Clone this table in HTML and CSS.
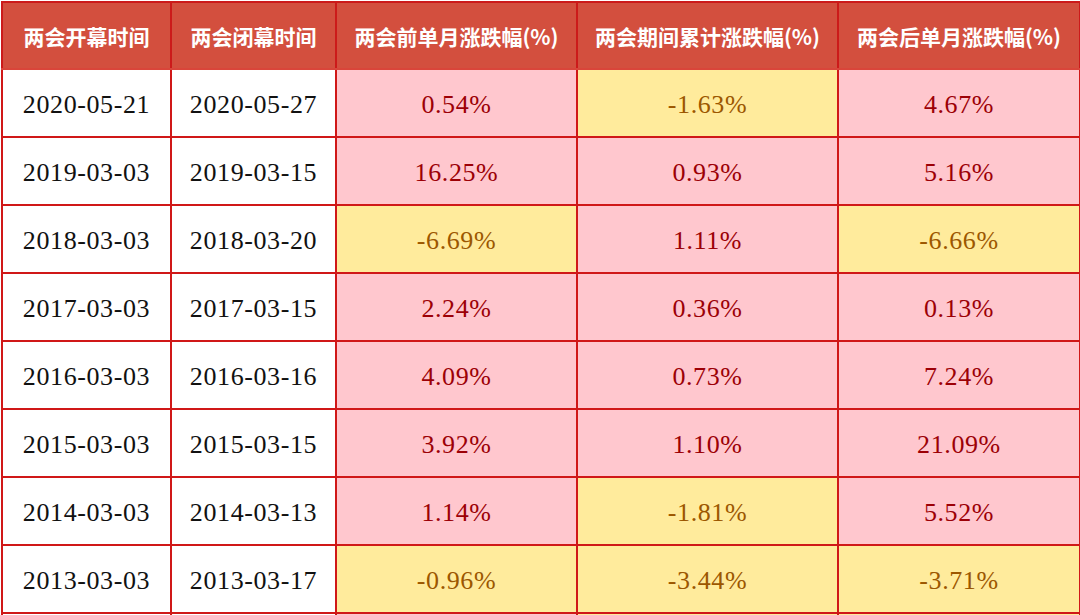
FILE: index.html
```html
<!DOCTYPE html>
<html lang="zh-CN">
<head>
<meta charset="utf-8">
<title>两会期间涨跌幅</title>
<link rel="stylesheet" href="styles.css">
</head>
<body>
<div class="wrap">
<table class="grid">
  <colgroup>
    <col class="c1"><col class="c2"><col class="c3"><col class="c4"><col class="c5">
  </colgroup>
  <thead>
    <tr>
      <th>两会开幕时间</th>
      <th>两会闭幕时间</th>
      <th>两会前单月涨跌幅(%)</th>
      <th>两会期间累计涨跌幅(%)</th>
      <th>两会后单月涨跌幅(%)</th>
    </tr>
  </thead>
  <tbody>
    <tr><td>2020-05-21</td><td>2020-05-27</td><td class="up">0.54%</td><td class="dn">-1.63%</td><td class="up">4.67%</td></tr>
    <tr><td>2019-03-03</td><td>2019-03-15</td><td class="up">16.25%</td><td class="up">0.93%</td><td class="up">5.16%</td></tr>
    <tr><td>2018-03-03</td><td>2018-03-20</td><td class="dn">-6.69%</td><td class="up">1.11%</td><td class="dn">-6.66%</td></tr>
    <tr><td>2017-03-03</td><td>2017-03-15</td><td class="up">2.24%</td><td class="up">0.36%</td><td class="up">0.13%</td></tr>
    <tr><td>2016-03-03</td><td>2016-03-16</td><td class="up">4.09%</td><td class="up">0.73%</td><td class="up">7.24%</td></tr>
    <tr><td>2015-03-03</td><td>2015-03-15</td><td class="up">3.92%</td><td class="up">1.10%</td><td class="up">21.09%</td></tr>
    <tr><td>2014-03-03</td><td>2014-03-13</td><td class="up">1.14%</td><td class="dn">-1.81%</td><td class="up">5.52%</td></tr>
    <tr><td>2013-03-03</td><td>2013-03-17</td><td class="dn">-0.96%</td><td class="dn">-3.44%</td><td class="dn">-3.71%</td></tr>
    <tr><td></td><td></td><td class="up"></td><td class="dn"></td><td class="dn"></td></tr>
  </tbody>
</table>
</div>
</body>
</html>
```

FILE: styles.css
```css
html, body {
  margin: 0;
  padding: 0;
  background: #ffffff;
  overflow: hidden;
}

.wrap {
  padding: 1px 1px 0 1px;
  width: 1078px;
}

.grid {
  border-collapse: collapse;
  table-layout: fixed;
  width: 1078px;
  border: 2px solid #d9453a;
}

.c1 { width: 169px; }
.c2 { width: 165px; }
.c3 { width: 241px; }
.c4 { width: 261px; }
.c5 { width: 242px; }

.grid th {
  height: 65px;
  padding: 0;
  background: #d34f3e;
  color: #ffffff;
  font-family: "Noto Sans CJK SC", "Noto Sans", sans-serif;
  font-weight: 700;
  font-size: 21px;
  text-align: center;
  vertical-align: middle;
  border: 2px solid #cc1a1a;
  border-bottom-color: #d9453a;
}

.grid td {
  height: 62px;
  padding: 4px 0 0 0;
  text-align: center;
  vertical-align: middle;
  font-family: "Liberation Serif", "DejaVu Serif", serif;
  font-size: 26px;
  letter-spacing: 0.6px;
  color: #111111;
  background: #ffffff;
  border: 2px solid #d01818;
}

.grid td.up {
  background: #ffc7ce;
  color: #9c0006;
}

.grid td.dn {
  background: #ffeb9c;
  color: #9c5700;
}
```
